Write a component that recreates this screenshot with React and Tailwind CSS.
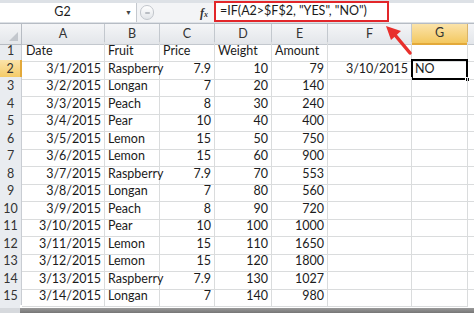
import React from "react";

const rows = [
  ["Date", "Fruit", "Price", "Weight", "Amount", "", ""],
  ["3/1/2015", "Raspberry", "7.9", "10", "79", "3/10/2015", "NO"],
  ["3/2/2015", "Longan", "7", "20", "140", "", ""],
  ["3/3/2015", "Peach", "8", "30", "240", "", ""],
  ["3/4/2015", "Pear", "10", "40", "400", "", ""],
  ["3/5/2015", "Lemon", "15", "50", "750", "", ""],
  ["3/6/2015", "Lemon", "15", "60", "900", "", ""],
  ["3/7/2015", "Raspberry", "7.9", "70", "553", "", ""],
  ["3/8/2015", "Longan", "7", "80", "560", "", ""],
  ["3/9/2015", "Peach", "8", "90", "720", "", ""],
  ["3/10/2015", "Pear", "10", "100", "1000", "", ""],
  ["3/11/2015", "Lemon", "15", "110", "1650", "", ""],
  ["3/12/2015", "Lemon", "15", "120", "1800", "", ""],
  ["3/13/2015", "Raspberry", "7.9", "130", "1027", "", ""],
  ["3/14/2015", "Longan", "7", "140", "980", "", ""],
];

const letters = ["A", "B", "C", "D", "E", "F", "G"];
const grid = "grid grid-cols-[22px_83px_55px_55px_57px_56px_84px_56px_6px]";

// text columns are left aligned, numbers right aligned
const leftCols = [1, 6];

const App = () => {
  return (
    <div className="relative w-[474px] h-[313px] overflow-hidden bg-white text-[#1b1b1b] font-['Lato','Liberation_Sans',sans-serif] text-[12.5px]">
      {/* Formula bar */}
      <div className="flex h-[23px] bg-[#dde1e6]">
        <div className="mt-[3px] h-[19px] w-[137px] flex items-center bg-white border-r border-[#c4c8ce]">
          <span className="flex-1 text-center">G2</span>
          <span className="mr-[4px] text-[7px] text-[#444]">▼</span>
        </div>
        <div className="mt-[3px] h-[19px] w-[77px] flex items-center bg-[#f3f4f6]">
          <div className="ml-[3px] h-[15px] w-[14px] rounded-full border border-[#c2c6cc] bg-gradient-to-b from-white to-[#e2e5e9] flex items-center justify-center">
            <div className="w-[5px] h-[2px] bg-[#b9bdc3] rounded-full" />
          </div>
          <span className="ml-auto mr-[6px] font-['Liberation_Serif',serif] italic font-bold text-[12px] text-[#333]">
            f<span className="text-[8px]">x</span>
          </span>
        </div>
        <div className="mt-[1px] h-[21px] w-[175px] flex items-center border-2 border-[#e2262a] bg-white pl-[4px] whitespace-nowrap">
          =IF(A2&gt;$F$2, "YES", "NO")
        </div>
        <div className="mt-[3px] h-[19px] flex-1 bg-white" />
      </div>
      <div className="h-px bg-[#b6bcc4]" />

      {/* Column headers */}
      <div className={`${grid} h-[18px]`}>
        <div className="relative bg-gradient-to-b from-[#f4f5f7] to-[#e3e6ea] border-r border-b border-[#b7bcc3]">
          <div className="absolute right-[3px] bottom-[3px] w-0 h-0 border-l-[9px] border-l-transparent border-b-[9px] border-b-[#c3c7cd]" />
        </div>
        {letters.map((l) =>
          l === "G" ? (
            <div
              key={l}
              className="flex items-center justify-center bg-gradient-to-b from-[#fbe3a9] to-[#f3c85e] border-r border-b-2 border-r-[#d9b46a] border-b-[#e3a93a] text-[#333]"
            >
              {l}
            </div>
          ) : (
            <div
              key={l}
              className="flex items-center justify-center bg-gradient-to-b from-[#f4f5f7] to-[#e3e6ea] border-r border-b border-[#c3c8ce] text-[#333]"
            >
              {l}
            </div>
          )
        )}
        <div className="bg-gradient-to-b from-[#f4f5f7] to-[#e3e6ea] border-b border-[#c3c8ce]" />
      </div>

      {/* Rows */}
      {rows.map((r, i) => (
        <div key={i} className={`${grid} ${i % 2 === 0 ? "h-[18px]" : "h-[17px]"}`}>
          {i === 1 ? (
            <div className="flex items-center justify-center bg-gradient-to-b from-[#fbe3a9] to-[#f3c85e] border-b border-r-2 border-b-[#d9b46a] border-r-[#e3a93a] text-[#333]">
              {i + 1}
            </div>
          ) : (
            <div className="flex items-center justify-center bg-[#e9ecf0] border-b border-r border-[#c9cdd3] text-[#333]">
              {i + 1}
            </div>
          )}
          {r.map((c, j) => (
            <div
              key={j}
              className={`relative flex items-center px-[3px] whitespace-nowrap border-r border-b border-[#dadcdd] ${
                i === 0 || leftCols.includes(j) ? "justify-start" : "justify-end"
              }`}
            >
              {i === 0 && j === 0 ? <span className="ml-[1px]">{c}</span> : c}
              {i === 1 && j === 6 && (
                <>
                  <div className="absolute -left-[1px] -top-[1px] -right-[1px] -bottom-[1px] border-2 border-black" />
                  <div className="absolute -right-[3px] -bottom-[3px] w-[5px] h-[5px] bg-black border border-white" />
                </>
              )}
            </div>
          ))}
          <div className="border-b border-[#dadcdd]" />
        </div>
      ))}

      {/* bottom edge */}
      <div className="flex h-[3px]">
        <div className="w-[20px] bg-[#e9ecf0]" />
        <div className="flex-1 bg-white" />
      </div>
      <div className="flex h-[6px]">
        <div className="w-[20px] bg-[#d6d9dd]" />
        <div className="flex-1 bg-gradient-to-b from-[#9a9a9a] to-[#6f6f6f]" />
      </div>

      {/* red arrow pointing at the formula */}
      <svg className="absolute left-[380px] top-[20px]" width="36" height="40" viewBox="0 0 36 40">
        <path d="M30 33 L15 15" stroke="#e8302c" strokeWidth="3.5" strokeLinecap="round" />
        <path d="M6 6 L21 11 L11 20 Z" fill="#e8302c" />
      </svg>
    </div>
  );
};

export default App;
